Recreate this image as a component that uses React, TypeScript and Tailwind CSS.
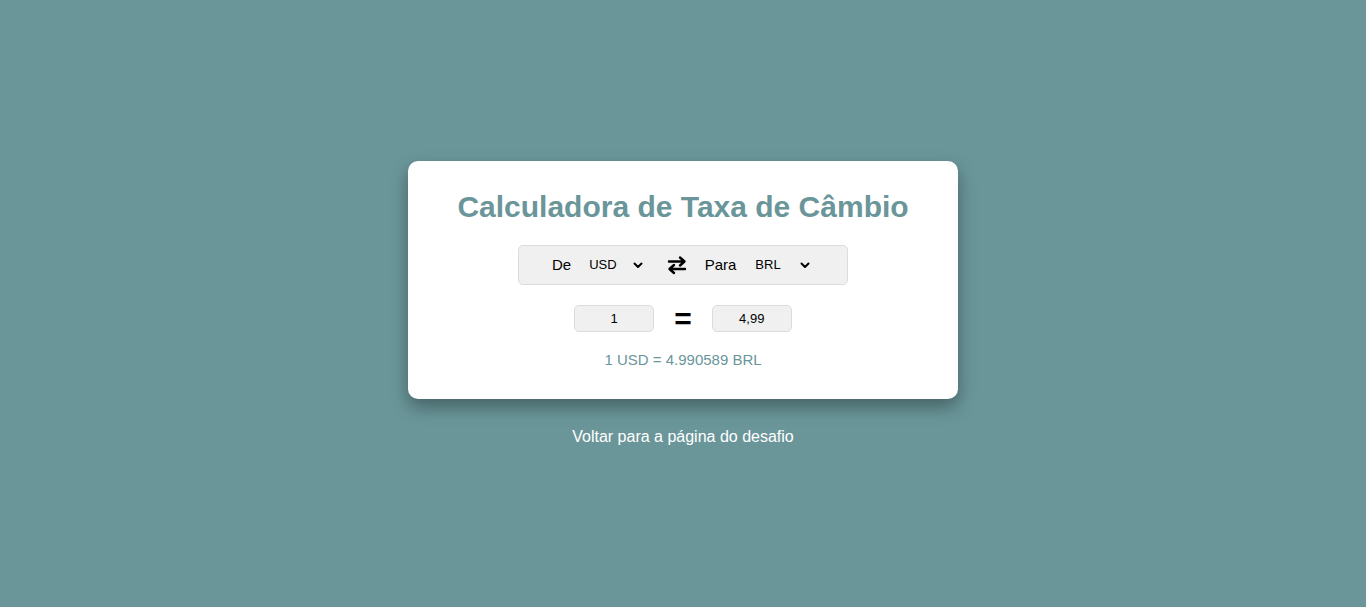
function Chevron() {
  return (
    <svg width="10" height="7" viewBox="0 0 10 7" className="shrink-0">
      <path d="M1.5 1.5 L5 5 L8.5 1.5" fill="none" stroke="#000" strokeWidth="2" strokeLinecap="round" strokeLinejoin="round" />
    </svg>
  );
}

function SwapIcon() {
  return (
    <svg width="20" height="20" viewBox="0 0 20 20">
      <path d="M2 6.5 H17 M13 2.5 L17.5 6.5 L13 10.5" fill="none" stroke="#000" strokeWidth="2.4" strokeLinecap="round" strokeLinejoin="round" />
      <path d="M18 14 H3 M7 10 L2.5 14 L7 18" fill="none" stroke="#000" strokeWidth="2.4" strokeLinecap="round" strokeLinejoin="round" />
    </svg>
  );
}

export default function App() {
  return (
    <div className="min-h-[607px] bg-[#6a969a] flex flex-col items-center pt-[161px] font-['Liberation_Sans',Arial,sans-serif]">
      {/* Card */}
      <div className="w-[550px] h-[238px] bg-white rounded-[10px] shadow-[0_8px_18px_rgba(0,0,0,0.35)] flex flex-col items-center pt-[27px]">
        <h1 className="text-[30px] leading-[37px] font-bold text-[#6a969a]">Calculadora de Taxa de Câmbio</h1>

        {/* Currency selector */}
        <div className="mt-[20px] w-[330px] h-[40px] bg-[#f0f0f0] border border-[#dcdcdc] rounded-[5px] flex items-center pl-[33px]">
          <span className="text-[15px] text-black">De</span>
          <span className="ml-[18px] text-[13px] text-black">USD</span>
          <span className="ml-[16px]"><Chevron /></span>
          <span className="ml-[24px]"><SwapIcon /></span>
          <span className="ml-[18px] text-[15px] text-black">Para</span>
          <span className="ml-[19px] text-[13px] text-black">BRL</span>
          <span className="ml-[19px]"><Chevron /></span>
        </div>

        {/* Amounts */}
        <div className="mt-[20px] flex items-center">
          <div className="w-[80px] h-[27px] bg-[#f0f0f0] border border-[#dcdcdc] rounded-[5px] flex items-center justify-center text-[13px] text-black">1</div>
          <span className="mx-[20px] text-[30px] leading-[27px] font-bold text-black">=</span>
          <div className="w-[80px] h-[27px] bg-[#f0f0f0] border border-[#dcdcdc] rounded-[5px] flex items-center justify-center text-[13px] text-black">4,99</div>
        </div>

        <p className="mt-[19px] text-[15px] leading-[18px] text-[#6a969a]">1 USD = 4.990589 BRL</p>
      </div>

      <a className="mt-[29px] text-[16px] leading-[18px] text-white">Voltar para a página do desafio</a>
    </div>
  );
}
